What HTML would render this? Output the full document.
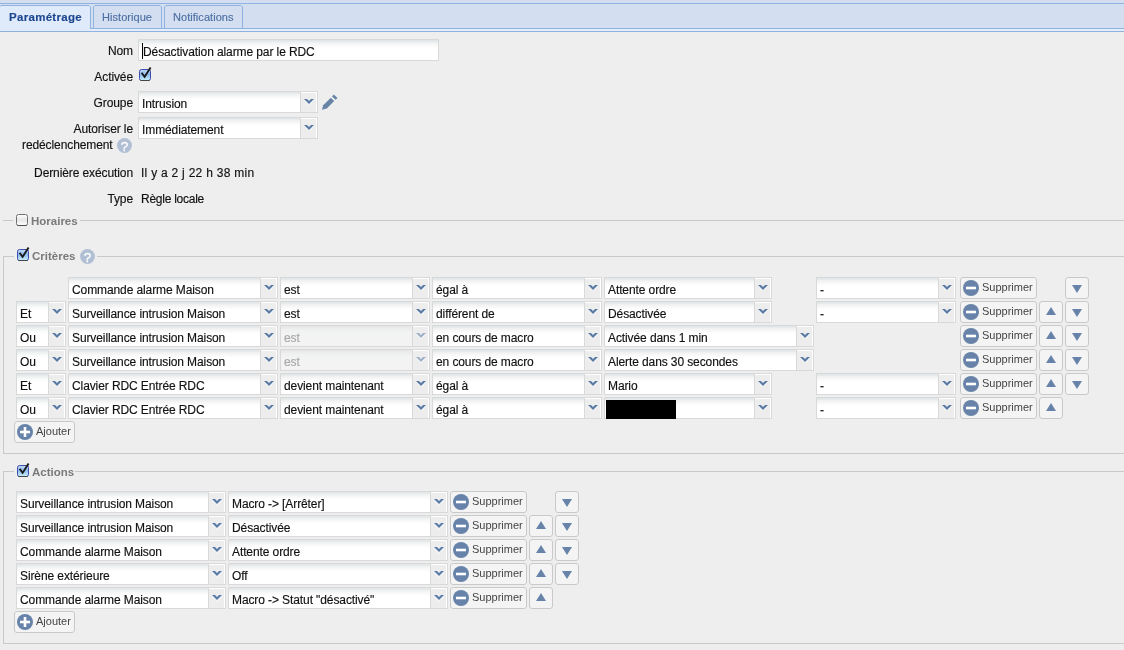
<!DOCTYPE html><html><head><meta charset="utf-8"><title>Paramétrage</title><style>
*{margin:0;padding:0;box-sizing:border-box}
html,body{width:1124px;height:650px;overflow:hidden;background:#eeeeee;font-family:"Liberation Sans", sans-serif;font-size:12px;color:#111}
.a{position:absolute}
#root div{-webkit-text-stroke:0.15px currentColor;letter-spacing:-0.1px}
#root .leg,#root .btn .t{-webkit-text-stroke:0;letter-spacing:0}
.lbl{position:absolute;right:991px;white-space:nowrap;color:#111;font-size:12px;line-height:14px}
.txt{position:absolute;white-space:nowrap;color:#111;font-size:12px;line-height:14px}
.sel{position:absolute;height:22px;border:1px solid #d9d9d9;background:linear-gradient(#dee3e6 0px,#f1f3f3 3px,#fbfbfb 6px,#fff 8px);}
.sel .v{position:absolute;left:3px;top:5px;white-space:nowrap;font-size:12px;line-height:14px;color:#111}
.sel .ar{position:absolute;right:-1px;top:-1px;width:18px;height:22px;border:1px solid #d9d9d9;background:#ededed;box-shadow:inset 0 1px 0 #fff, inset -1px 0 0 #fff}
.sel .ar svg{position:absolute;left:2.5px;top:7px}
.sel.dis{background:linear-gradient(#e3e6e8 0px,#eff0f0 4px,#f3f3f3 7px)}
.sel.dis .v{color:#a8a8a8}
.btn{position:absolute;height:22px;border:1px solid #c9c9c9;border-radius:3px;background:#f4f4f4;}
.btn .t{position:absolute;white-space:nowrap;font-size:11px;line-height:12px;color:#444}
.fl{position:absolute;height:1px;background:#c9c9c9}
.fv{position:absolute;width:1px;background:#c9c9c9}
.leg{position:absolute;white-space:nowrap;font-weight:bold;font-size:11.5px;line-height:13px;color:#7a7a7a}
</style></head><body><div id="root" style="position:absolute;left:0;top:0;width:1124px;height:650px;will-change:transform">
<div class="a" style="left:0;top:0;width:1124px;height:29px;background:#d3dff0"></div>
<div class="a" style="left:0;top:3px;width:1124px;height:1px;background:#8fb2e0"></div>
<div class="a" style="left:90px;top:28px;width:1034px;height:1px;background:#8fb2e0"></div>
<div class="a" style="left:0;top:29px;width:1124px;height:2px;background:#e3edfb"></div>
<div class="a" style="left:0;top:31px;width:1124px;height:1px;background:#8fb2e0"></div>
<svg class="a" style="left:-1px;top:5px" width="92" height="26" viewBox="0 0 92 26"><path d="M0 26 L0 2 L2 0 L90 0 L92 2 L92 26 Z" fill="#dfeafa"/><path d="M0.5 26 L0.5 2 L2 0.5 L90 0.5 L91.5 2 L91.5 24" fill="none" stroke="#8fb2e0" stroke-width="1"/></svg>
<div class="txt" style="left:9px;top:10px;font-size:11.5px;font-weight:bold;color:#1d4690;letter-spacing:0.3px">Paramétrage</div>
<svg class="a" style="left:93px;top:5px" width="69" height="23" viewBox="0 0 69 23"><path d="M0 23 L0 2 L2 0 L67 0 L69 2 L69 23 Z" fill="#d3dff0"/><path d="M0.5 23 L0.5 2 L2 0.5 L67 0.5 L68.5 2 L68.5 23" fill="none" stroke="#8fb2e0" stroke-width="1"/></svg>
<div class="txt" style="left:102px;top:10px;font-size:11px;font-weight:normal;color:#4d6fa3;letter-spacing:0.05px">Historique</div>
<svg class="a" style="left:164px;top:5px" width="79" height="23" viewBox="0 0 79 23"><path d="M0 23 L0 2 L2 0 L77 0 L79 2 L79 23 Z" fill="#d3dff0"/><path d="M0.5 23 L0.5 2 L2 0.5 L77 0.5 L78.5 2 L78.5 23" fill="none" stroke="#8fb2e0" stroke-width="1"/></svg>
<div class="txt" style="left:173px;top:10px;font-size:11px;font-weight:normal;color:#4d6fa3;letter-spacing:0.05px">Notifications</div>
<div class="a" style="right:991px;top:44px;white-space:nowrap;color:#111;font-size:12px;line-height:14px">Nom</div>
<div class="a" style="left:138px;top:39px;width:301px;height:22px;border:1px solid #d9d9d9;background:linear-gradient(#dee3e6 0px,#f1f3f3 3px,#fbfbfb 6px,#fff 8px)"></div>
<div class="a" style="left:142px;top:43px;width:1px;height:16px;background:#000"></div>
<div class="txt" style="left:143px;top:45px;color:#111">Désactivation alarme par le RDC</div>
<div class="a" style="right:991px;top:70px;white-space:nowrap;color:#111;font-size:12px;line-height:14px">Activée</div>
<svg class="a" style="left:139px;top:66px" width="14" height="16" viewBox="0 0 14 16"><defs><linearGradient id="cg13969" x1="0" y1="0" x2="0" y2="1"><stop offset="0" stop-color="#c4dcf8"/><stop offset="0.45" stop-color="#8cb9ee"/><stop offset="1" stop-color="#c9f1fc"/></linearGradient></defs><rect x="0.5" y="3.5" width="11" height="11" rx="2" fill="url(#cg13969)" stroke="#3f4cae" stroke-width="1"/><path d="M1.5 14.5 H10.5" stroke="#444" stroke-width="1"/><polyline points="2.6,6.8 5.6,10.9 11.6,1.4" fill="none" stroke="#1a1a1a" stroke-width="1.9" stroke-linejoin="miter"/></svg>
<div class="a" style="right:991px;top:96px;white-space:nowrap;color:#111;font-size:12px;line-height:14px">Groupe</div>
<div class="sel" style="left:138px;top:91px;width:180px"><div class="v">Intrusion</div><div class="ar"><svg width="10" height="7" viewBox="0 0 10 7"><polygon points="0,1 3,1 5,3 7,1 10,1 5,6" fill="#fff" opacity="0.9"/><polygon points="0,0 3,0 5,2 7,0 10,0 5,5" fill="#5a7aa6"/></svg></div></div>
<svg class="a" style="left:316px;top:90px" width="24" height="24" viewBox="0 0 24 24"><path d="M6 19.8 L7.2 15.2 L14.8 7.8 L18.2 11 L10.8 18.4 Z" fill="#6a84a8"/><path d="M16 6.4 L17.8 4.4 L21.6 8 L19.6 9.8 Z" fill="#6a84a8"/></svg>
<div class="a" style="right:991px;top:122px;white-space:nowrap;color:#111;font-size:12px;line-height:14px">Autoriser le</div>
<div class="a" style="left:22px;top:138px;white-space:nowrap;color:#111;font-size:12px;line-height:14px">redéclenchement</div>
<svg class="a" style="left:117.0px;top:138.0px" width="15.0" height="15.0" viewBox="0 0 15 15"><circle cx="7.5" cy="7.5" r="7.4" fill="#b1bfd4"/><text x="7.5" y="12.6" text-anchor="middle" font-family="Liberation Sans" font-size="13.5" fill="#fff" stroke="#fff" stroke-width="0.3">?</text></svg>
<div class="sel" style="left:138px;top:117px;width:180px"><div class="v">Immédiatement</div><div class="ar"><svg width="10" height="7" viewBox="0 0 10 7"><polygon points="0,1 3,1 5,3 7,1 10,1 5,6" fill="#fff" opacity="0.9"/><polygon points="0,0 3,0 5,2 7,0 10,0 5,5" fill="#5a7aa6"/></svg></div></div>
<div class="a" style="right:991px;top:166px;white-space:nowrap;color:#111;font-size:12px;line-height:14px">Dernière exécution</div>
<div class="txt" style="left:141px;top:166px;letter-spacing:0.27px">Il y a 2 j 22 h 38 min</div>
<div class="a" style="right:991px;top:192px;white-space:nowrap;color:#111;font-size:12px;line-height:14px">Type</div>
<div class="txt" style="left:141px;top:192px;letter-spacing:-0.25px">Règle locale</div>
<div class="fl" style="left:3px;top:220px;width:10px"></div>
<div class="fl" style="left:80px;top:220px;width:1044px"></div>
<svg class="a" style="left:16px;top:214px" width="13" height="13" viewBox="0 0 13 13"><defs><linearGradient id="cu16214" x1="0" y1="0" x2="0" y2="1"><stop offset="0" stop-color="#fdfdfd"/><stop offset="0.5" stop-color="#e6e6e6"/><stop offset="1" stop-color="#ffffff"/></linearGradient></defs><rect x="0.5" y="0.5" width="11" height="11" rx="2" fill="url(#cu16214)" stroke="#707070" stroke-width="1"/><path d="M1.5 11.5 H10.5" stroke="#505050" stroke-width="1"/></svg>
<div class="leg" style="left:31px;top:215px">Horaires</div>
<div class="fl" style="left:3px;top:256px;width:11px"></div>
<div class="fl" style="left:97px;top:256px;width:1027px"></div>
<div class="fv" style="left:3px;top:256px;height:198px"></div>
<div class="fl" style="left:3px;top:453px;width:1121px"></div>
<svg class="a" style="left:17px;top:246px" width="14" height="16" viewBox="0 0 14 16"><defs><linearGradient id="cg17249" x1="0" y1="0" x2="0" y2="1"><stop offset="0" stop-color="#c4dcf8"/><stop offset="0.45" stop-color="#8cb9ee"/><stop offset="1" stop-color="#c9f1fc"/></linearGradient></defs><rect x="0.5" y="3.5" width="11" height="11" rx="2" fill="url(#cg17249)" stroke="#3f4cae" stroke-width="1"/><path d="M1.5 14.5 H10.5" stroke="#444" stroke-width="1"/><polyline points="2.6,6.8 5.6,10.9 11.6,1.4" fill="none" stroke="#1a1a1a" stroke-width="1.9" stroke-linejoin="miter"/></svg>
<div class="leg" style="left:32px;top:250px">Critères</div>
<svg class="a" style="left:79.5px;top:249.2px" width="15.0" height="15.0" viewBox="0 0 15 15"><circle cx="7.5" cy="7.5" r="7.4" fill="#b1bfd4"/><text x="7.5" y="12.6" text-anchor="middle" font-family="Liberation Sans" font-size="13.5" fill="#fff" stroke="#fff" stroke-width="0.3">?</text></svg>
<div class="sel" style="left:68px;top:277px;width:210px"><div class="v">Commande alarme Maison</div><div class="ar"><svg width="10" height="7" viewBox="0 0 10 7"><polygon points="0,1 3,1 5,3 7,1 10,1 5,6" fill="#fff" opacity="0.9"/><polygon points="0,0 3,0 5,2 7,0 10,0 5,5" fill="#5a7aa6"/></svg></div></div>
<div class="sel" style="left:280px;top:277px;width:150px"><div class="v">est</div><div class="ar"><svg width="10" height="7" viewBox="0 0 10 7"><polygon points="0,1 3,1 5,3 7,1 10,1 5,6" fill="#fff" opacity="0.9"/><polygon points="0,0 3,0 5,2 7,0 10,0 5,5" fill="#5a7aa6"/></svg></div></div>
<div class="sel" style="left:432px;top:277px;width:170px"><div class="v">égal à</div><div class="ar"><svg width="10" height="7" viewBox="0 0 10 7"><polygon points="0,1 3,1 5,3 7,1 10,1 5,6" fill="#fff" opacity="0.9"/><polygon points="0,0 3,0 5,2 7,0 10,0 5,5" fill="#5a7aa6"/></svg></div></div>
<div class="sel" style="left:604px;top:277px;width:168px"><div class="v">Attente ordre</div><div class="ar"><svg width="10" height="7" viewBox="0 0 10 7"><polygon points="0,1 3,1 5,3 7,1 10,1 5,6" fill="#fff" opacity="0.9"/><polygon points="0,0 3,0 5,2 7,0 10,0 5,5" fill="#5a7aa6"/></svg></div></div>
<div class="sel" style="left:816px;top:277px;width:140px"><div class="v">-</div><div class="ar"><svg width="10" height="7" viewBox="0 0 10 7"><polygon points="0,1 3,1 5,3 7,1 10,1 5,6" fill="#fff" opacity="0.9"/><polygon points="0,0 3,0 5,2 7,0 10,0 5,5" fill="#5a7aa6"/></svg></div></div>
<div class="btn" style="left:960px;top:277px;width:77px"><svg class="a" style="left:2px;top:2px" width="16" height="16" viewBox="0 0 16 16"><circle cx="8" cy="8" r="8" fill="#6883a9"/><rect x="3" y="6.7" width="10" height="2.6" fill="#fff"/></svg><div class="t" style="left:21px;top:3px">Supprimer</div></div>
<div class="btn" style="left:1065px;top:277px;width:24px"><svg class="a" style="left:5px;top:6px" width="12" height="10" viewBox="0 0 12 10"><polygon points="1,1 6,9 11,1" fill="#6883a9"/></svg></div>
<div class="sel" style="left:16px;top:301px;width:50px"><div class="v">Et</div><div class="ar"><svg width="10" height="7" viewBox="0 0 10 7"><polygon points="0,1 3,1 5,3 7,1 10,1 5,6" fill="#fff" opacity="0.9"/><polygon points="0,0 3,0 5,2 7,0 10,0 5,5" fill="#5a7aa6"/></svg></div></div>
<div class="sel" style="left:68px;top:301px;width:210px"><div class="v">Surveillance intrusion Maison</div><div class="ar"><svg width="10" height="7" viewBox="0 0 10 7"><polygon points="0,1 3,1 5,3 7,1 10,1 5,6" fill="#fff" opacity="0.9"/><polygon points="0,0 3,0 5,2 7,0 10,0 5,5" fill="#5a7aa6"/></svg></div></div>
<div class="sel" style="left:280px;top:301px;width:150px"><div class="v">est</div><div class="ar"><svg width="10" height="7" viewBox="0 0 10 7"><polygon points="0,1 3,1 5,3 7,1 10,1 5,6" fill="#fff" opacity="0.9"/><polygon points="0,0 3,0 5,2 7,0 10,0 5,5" fill="#5a7aa6"/></svg></div></div>
<div class="sel" style="left:432px;top:301px;width:170px"><div class="v">différent de</div><div class="ar"><svg width="10" height="7" viewBox="0 0 10 7"><polygon points="0,1 3,1 5,3 7,1 10,1 5,6" fill="#fff" opacity="0.9"/><polygon points="0,0 3,0 5,2 7,0 10,0 5,5" fill="#5a7aa6"/></svg></div></div>
<div class="sel" style="left:604px;top:301px;width:168px"><div class="v">Désactivée</div><div class="ar"><svg width="10" height="7" viewBox="0 0 10 7"><polygon points="0,1 3,1 5,3 7,1 10,1 5,6" fill="#fff" opacity="0.9"/><polygon points="0,0 3,0 5,2 7,0 10,0 5,5" fill="#5a7aa6"/></svg></div></div>
<div class="sel" style="left:816px;top:301px;width:140px"><div class="v">-</div><div class="ar"><svg width="10" height="7" viewBox="0 0 10 7"><polygon points="0,1 3,1 5,3 7,1 10,1 5,6" fill="#fff" opacity="0.9"/><polygon points="0,0 3,0 5,2 7,0 10,0 5,5" fill="#5a7aa6"/></svg></div></div>
<div class="btn" style="left:960px;top:301px;width:77px"><svg class="a" style="left:2px;top:2px" width="16" height="16" viewBox="0 0 16 16"><circle cx="8" cy="8" r="8" fill="#6883a9"/><rect x="3" y="6.7" width="10" height="2.6" fill="#fff"/></svg><div class="t" style="left:21px;top:3px">Supprimer</div></div>
<div class="btn" style="left:1039px;top:301px;width:24px"><svg class="a" style="left:5px;top:4px" width="12" height="10" viewBox="0 0 12 10"><polygon points="1,9 6,1 11,9" fill="#6883a9"/></svg></div>
<div class="btn" style="left:1065px;top:301px;width:24px"><svg class="a" style="left:5px;top:6px" width="12" height="10" viewBox="0 0 12 10"><polygon points="1,1 6,9 11,1" fill="#6883a9"/></svg></div>
<div class="sel" style="left:16px;top:325px;width:50px"><div class="v">Ou</div><div class="ar"><svg width="10" height="7" viewBox="0 0 10 7"><polygon points="0,1 3,1 5,3 7,1 10,1 5,6" fill="#fff" opacity="0.9"/><polygon points="0,0 3,0 5,2 7,0 10,0 5,5" fill="#5a7aa6"/></svg></div></div>
<div class="sel" style="left:68px;top:325px;width:210px"><div class="v">Surveillance intrusion Maison</div><div class="ar"><svg width="10" height="7" viewBox="0 0 10 7"><polygon points="0,1 3,1 5,3 7,1 10,1 5,6" fill="#fff" opacity="0.9"/><polygon points="0,0 3,0 5,2 7,0 10,0 5,5" fill="#5a7aa6"/></svg></div></div>
<div class="sel dis" style="left:280px;top:325px;width:150px"><div class="v">est</div><div class="ar"><svg width="10" height="7" viewBox="0 0 10 7"><polygon points="0,1 3,1 5,3 7,1 10,1 5,6" fill="#fff" opacity="0.9"/><polygon points="0,0 3,0 5,2 7,0 10,0 5,5" fill="#9eb0c6"/></svg></div></div>
<div class="sel" style="left:432px;top:325px;width:170px"><div class="v">en cours de macro</div><div class="ar"><svg width="10" height="7" viewBox="0 0 10 7"><polygon points="0,1 3,1 5,3 7,1 10,1 5,6" fill="#fff" opacity="0.9"/><polygon points="0,0 3,0 5,2 7,0 10,0 5,5" fill="#5a7aa6"/></svg></div></div>
<div class="sel" style="left:604px;top:325px;width:210px"><div class="v">Activée dans 1 min</div><div class="ar"><svg width="10" height="7" viewBox="0 0 10 7"><polygon points="0,1 3,1 5,3 7,1 10,1 5,6" fill="#fff" opacity="0.9"/><polygon points="0,0 3,0 5,2 7,0 10,0 5,5" fill="#5a7aa6"/></svg></div></div>
<div class="btn" style="left:960px;top:325px;width:77px"><svg class="a" style="left:2px;top:2px" width="16" height="16" viewBox="0 0 16 16"><circle cx="8" cy="8" r="8" fill="#6883a9"/><rect x="3" y="6.7" width="10" height="2.6" fill="#fff"/></svg><div class="t" style="left:21px;top:3px">Supprimer</div></div>
<div class="btn" style="left:1039px;top:325px;width:24px"><svg class="a" style="left:5px;top:4px" width="12" height="10" viewBox="0 0 12 10"><polygon points="1,9 6,1 11,9" fill="#6883a9"/></svg></div>
<div class="btn" style="left:1065px;top:325px;width:24px"><svg class="a" style="left:5px;top:6px" width="12" height="10" viewBox="0 0 12 10"><polygon points="1,1 6,9 11,1" fill="#6883a9"/></svg></div>
<div class="sel" style="left:16px;top:349px;width:50px"><div class="v">Ou</div><div class="ar"><svg width="10" height="7" viewBox="0 0 10 7"><polygon points="0,1 3,1 5,3 7,1 10,1 5,6" fill="#fff" opacity="0.9"/><polygon points="0,0 3,0 5,2 7,0 10,0 5,5" fill="#5a7aa6"/></svg></div></div>
<div class="sel" style="left:68px;top:349px;width:210px"><div class="v">Surveillance intrusion Maison</div><div class="ar"><svg width="10" height="7" viewBox="0 0 10 7"><polygon points="0,1 3,1 5,3 7,1 10,1 5,6" fill="#fff" opacity="0.9"/><polygon points="0,0 3,0 5,2 7,0 10,0 5,5" fill="#5a7aa6"/></svg></div></div>
<div class="sel dis" style="left:280px;top:349px;width:150px"><div class="v">est</div><div class="ar"><svg width="10" height="7" viewBox="0 0 10 7"><polygon points="0,1 3,1 5,3 7,1 10,1 5,6" fill="#fff" opacity="0.9"/><polygon points="0,0 3,0 5,2 7,0 10,0 5,5" fill="#9eb0c6"/></svg></div></div>
<div class="sel" style="left:432px;top:349px;width:170px"><div class="v">en cours de macro</div><div class="ar"><svg width="10" height="7" viewBox="0 0 10 7"><polygon points="0,1 3,1 5,3 7,1 10,1 5,6" fill="#fff" opacity="0.9"/><polygon points="0,0 3,0 5,2 7,0 10,0 5,5" fill="#5a7aa6"/></svg></div></div>
<div class="sel" style="left:604px;top:349px;width:210px"><div class="v">Alerte dans 30 secondes</div><div class="ar"><svg width="10" height="7" viewBox="0 0 10 7"><polygon points="0,1 3,1 5,3 7,1 10,1 5,6" fill="#fff" opacity="0.9"/><polygon points="0,0 3,0 5,2 7,0 10,0 5,5" fill="#5a7aa6"/></svg></div></div>
<div class="btn" style="left:960px;top:349px;width:77px"><svg class="a" style="left:2px;top:2px" width="16" height="16" viewBox="0 0 16 16"><circle cx="8" cy="8" r="8" fill="#6883a9"/><rect x="3" y="6.7" width="10" height="2.6" fill="#fff"/></svg><div class="t" style="left:21px;top:3px">Supprimer</div></div>
<div class="btn" style="left:1039px;top:349px;width:24px"><svg class="a" style="left:5px;top:4px" width="12" height="10" viewBox="0 0 12 10"><polygon points="1,9 6,1 11,9" fill="#6883a9"/></svg></div>
<div class="btn" style="left:1065px;top:349px;width:24px"><svg class="a" style="left:5px;top:6px" width="12" height="10" viewBox="0 0 12 10"><polygon points="1,1 6,9 11,1" fill="#6883a9"/></svg></div>
<div class="sel" style="left:16px;top:373px;width:50px"><div class="v">Et</div><div class="ar"><svg width="10" height="7" viewBox="0 0 10 7"><polygon points="0,1 3,1 5,3 7,1 10,1 5,6" fill="#fff" opacity="0.9"/><polygon points="0,0 3,0 5,2 7,0 10,0 5,5" fill="#5a7aa6"/></svg></div></div>
<div class="sel" style="left:68px;top:373px;width:210px"><div class="v">Clavier RDC Entrée RDC</div><div class="ar"><svg width="10" height="7" viewBox="0 0 10 7"><polygon points="0,1 3,1 5,3 7,1 10,1 5,6" fill="#fff" opacity="0.9"/><polygon points="0,0 3,0 5,2 7,0 10,0 5,5" fill="#5a7aa6"/></svg></div></div>
<div class="sel" style="left:280px;top:373px;width:150px"><div class="v">devient maintenant</div><div class="ar"><svg width="10" height="7" viewBox="0 0 10 7"><polygon points="0,1 3,1 5,3 7,1 10,1 5,6" fill="#fff" opacity="0.9"/><polygon points="0,0 3,0 5,2 7,0 10,0 5,5" fill="#5a7aa6"/></svg></div></div>
<div class="sel" style="left:432px;top:373px;width:170px"><div class="v">égal à</div><div class="ar"><svg width="10" height="7" viewBox="0 0 10 7"><polygon points="0,1 3,1 5,3 7,1 10,1 5,6" fill="#fff" opacity="0.9"/><polygon points="0,0 3,0 5,2 7,0 10,0 5,5" fill="#5a7aa6"/></svg></div></div>
<div class="sel" style="left:604px;top:373px;width:168px"><div class="v">Mario</div><div class="ar"><svg width="10" height="7" viewBox="0 0 10 7"><polygon points="0,1 3,1 5,3 7,1 10,1 5,6" fill="#fff" opacity="0.9"/><polygon points="0,0 3,0 5,2 7,0 10,0 5,5" fill="#5a7aa6"/></svg></div></div>
<div class="sel" style="left:816px;top:373px;width:140px"><div class="v">-</div><div class="ar"><svg width="10" height="7" viewBox="0 0 10 7"><polygon points="0,1 3,1 5,3 7,1 10,1 5,6" fill="#fff" opacity="0.9"/><polygon points="0,0 3,0 5,2 7,0 10,0 5,5" fill="#5a7aa6"/></svg></div></div>
<div class="btn" style="left:960px;top:373px;width:77px"><svg class="a" style="left:2px;top:2px" width="16" height="16" viewBox="0 0 16 16"><circle cx="8" cy="8" r="8" fill="#6883a9"/><rect x="3" y="6.7" width="10" height="2.6" fill="#fff"/></svg><div class="t" style="left:21px;top:3px">Supprimer</div></div>
<div class="btn" style="left:1039px;top:373px;width:24px"><svg class="a" style="left:5px;top:4px" width="12" height="10" viewBox="0 0 12 10"><polygon points="1,9 6,1 11,9" fill="#6883a9"/></svg></div>
<div class="btn" style="left:1065px;top:373px;width:24px"><svg class="a" style="left:5px;top:6px" width="12" height="10" viewBox="0 0 12 10"><polygon points="1,1 6,9 11,1" fill="#6883a9"/></svg></div>
<div class="sel" style="left:16px;top:397px;width:50px"><div class="v">Ou</div><div class="ar"><svg width="10" height="7" viewBox="0 0 10 7"><polygon points="0,1 3,1 5,3 7,1 10,1 5,6" fill="#fff" opacity="0.9"/><polygon points="0,0 3,0 5,2 7,0 10,0 5,5" fill="#5a7aa6"/></svg></div></div>
<div class="sel" style="left:68px;top:397px;width:210px"><div class="v">Clavier RDC Entrée RDC</div><div class="ar"><svg width="10" height="7" viewBox="0 0 10 7"><polygon points="0,1 3,1 5,3 7,1 10,1 5,6" fill="#fff" opacity="0.9"/><polygon points="0,0 3,0 5,2 7,0 10,0 5,5" fill="#5a7aa6"/></svg></div></div>
<div class="sel" style="left:280px;top:397px;width:150px"><div class="v">devient maintenant</div><div class="ar"><svg width="10" height="7" viewBox="0 0 10 7"><polygon points="0,1 3,1 5,3 7,1 10,1 5,6" fill="#fff" opacity="0.9"/><polygon points="0,0 3,0 5,2 7,0 10,0 5,5" fill="#5a7aa6"/></svg></div></div>
<div class="sel" style="left:432px;top:397px;width:170px"><div class="v">égal à</div><div class="ar"><svg width="10" height="7" viewBox="0 0 10 7"><polygon points="0,1 3,1 5,3 7,1 10,1 5,6" fill="#fff" opacity="0.9"/><polygon points="0,0 3,0 5,2 7,0 10,0 5,5" fill="#5a7aa6"/></svg></div></div>
<div class="sel" style="left:604px;top:397px;width:168px"><div class="a" style="left:1px;top:2px;width:70px;height:19px;background:#000"></div><div class="ar"><svg width="10" height="7" viewBox="0 0 10 7"><polygon points="0,1 3,1 5,3 7,1 10,1 5,6" fill="#fff" opacity="0.9"/><polygon points="0,0 3,0 5,2 7,0 10,0 5,5" fill="#5a7aa6"/></svg></div></div>
<div class="sel" style="left:816px;top:397px;width:140px"><div class="v">-</div><div class="ar"><svg width="10" height="7" viewBox="0 0 10 7"><polygon points="0,1 3,1 5,3 7,1 10,1 5,6" fill="#fff" opacity="0.9"/><polygon points="0,0 3,0 5,2 7,0 10,0 5,5" fill="#5a7aa6"/></svg></div></div>
<div class="btn" style="left:960px;top:397px;width:77px"><svg class="a" style="left:2px;top:2px" width="16" height="16" viewBox="0 0 16 16"><circle cx="8" cy="8" r="8" fill="#6883a9"/><rect x="3" y="6.7" width="10" height="2.6" fill="#fff"/></svg><div class="t" style="left:21px;top:3px">Supprimer</div></div>
<div class="btn" style="left:1039px;top:397px;width:24px"><svg class="a" style="left:5px;top:4px" width="12" height="10" viewBox="0 0 12 10"><polygon points="1,9 6,1 11,9" fill="#6883a9"/></svg></div>
<div class="btn" style="left:14px;top:421px;width:61px"><svg class="a" style="left:2px;top:2px" width="16" height="16" viewBox="0 0 16 16"><circle cx="8" cy="8" r="8" fill="#6883a9"/><rect x="3" y="6.7" width="10" height="2.6" fill="#fff"/><rect x="6.7" y="3" width="2.6" height="10" fill="#fff"/></svg><div class="t" style="left:21px;top:3px">Ajouter</div></div>
<div class="fl" style="left:3px;top:471px;width:11px"></div>
<div class="fl" style="left:75px;top:471px;width:1049px"></div>
<div class="fv" style="left:3px;top:471px;height:173px"></div>
<div class="fl" style="left:3px;top:643px;width:1121px"></div>
<svg class="a" style="left:17px;top:462px" width="14" height="16" viewBox="0 0 14 16"><defs><linearGradient id="cg17465" x1="0" y1="0" x2="0" y2="1"><stop offset="0" stop-color="#c4dcf8"/><stop offset="0.45" stop-color="#8cb9ee"/><stop offset="1" stop-color="#c9f1fc"/></linearGradient></defs><rect x="0.5" y="3.5" width="11" height="11" rx="2" fill="url(#cg17465)" stroke="#3f4cae" stroke-width="1"/><path d="M1.5 14.5 H10.5" stroke="#444" stroke-width="1"/><polyline points="2.6,6.8 5.6,10.9 11.6,1.4" fill="none" stroke="#1a1a1a" stroke-width="1.9" stroke-linejoin="miter"/></svg>
<div class="leg" style="left:32px;top:466px">Actions</div>
<div class="sel" style="left:16px;top:491px;width:210px"><div class="v">Surveillance intrusion Maison</div><div class="ar"><svg width="10" height="7" viewBox="0 0 10 7"><polygon points="0,1 3,1 5,3 7,1 10,1 5,6" fill="#fff" opacity="0.9"/><polygon points="0,0 3,0 5,2 7,0 10,0 5,5" fill="#5a7aa6"/></svg></div></div>
<div class="sel" style="left:228px;top:491px;width:220px"><div class="v">Macro -&gt; [Arrêter]</div><div class="ar"><svg width="10" height="7" viewBox="0 0 10 7"><polygon points="0,1 3,1 5,3 7,1 10,1 5,6" fill="#fff" opacity="0.9"/><polygon points="0,0 3,0 5,2 7,0 10,0 5,5" fill="#5a7aa6"/></svg></div></div>
<div class="btn" style="left:450px;top:491px;width:77px"><svg class="a" style="left:2px;top:2px" width="16" height="16" viewBox="0 0 16 16"><circle cx="8" cy="8" r="8" fill="#6883a9"/><rect x="3" y="6.7" width="10" height="2.6" fill="#fff"/></svg><div class="t" style="left:21px;top:3px">Supprimer</div></div>
<div class="btn" style="left:555px;top:491px;width:24px"><svg class="a" style="left:5px;top:6px" width="12" height="10" viewBox="0 0 12 10"><polygon points="1,1 6,9 11,1" fill="#6883a9"/></svg></div>
<div class="sel" style="left:16px;top:515px;width:210px"><div class="v">Surveillance intrusion Maison</div><div class="ar"><svg width="10" height="7" viewBox="0 0 10 7"><polygon points="0,1 3,1 5,3 7,1 10,1 5,6" fill="#fff" opacity="0.9"/><polygon points="0,0 3,0 5,2 7,0 10,0 5,5" fill="#5a7aa6"/></svg></div></div>
<div class="sel" style="left:228px;top:515px;width:220px"><div class="v">Désactivée</div><div class="ar"><svg width="10" height="7" viewBox="0 0 10 7"><polygon points="0,1 3,1 5,3 7,1 10,1 5,6" fill="#fff" opacity="0.9"/><polygon points="0,0 3,0 5,2 7,0 10,0 5,5" fill="#5a7aa6"/></svg></div></div>
<div class="btn" style="left:450px;top:515px;width:77px"><svg class="a" style="left:2px;top:2px" width="16" height="16" viewBox="0 0 16 16"><circle cx="8" cy="8" r="8" fill="#6883a9"/><rect x="3" y="6.7" width="10" height="2.6" fill="#fff"/></svg><div class="t" style="left:21px;top:3px">Supprimer</div></div>
<div class="btn" style="left:529px;top:515px;width:24px"><svg class="a" style="left:5px;top:4px" width="12" height="10" viewBox="0 0 12 10"><polygon points="1,9 6,1 11,9" fill="#6883a9"/></svg></div>
<div class="btn" style="left:555px;top:515px;width:24px"><svg class="a" style="left:5px;top:6px" width="12" height="10" viewBox="0 0 12 10"><polygon points="1,1 6,9 11,1" fill="#6883a9"/></svg></div>
<div class="sel" style="left:16px;top:539px;width:210px"><div class="v">Commande alarme Maison</div><div class="ar"><svg width="10" height="7" viewBox="0 0 10 7"><polygon points="0,1 3,1 5,3 7,1 10,1 5,6" fill="#fff" opacity="0.9"/><polygon points="0,0 3,0 5,2 7,0 10,0 5,5" fill="#5a7aa6"/></svg></div></div>
<div class="sel" style="left:228px;top:539px;width:220px"><div class="v">Attente ordre</div><div class="ar"><svg width="10" height="7" viewBox="0 0 10 7"><polygon points="0,1 3,1 5,3 7,1 10,1 5,6" fill="#fff" opacity="0.9"/><polygon points="0,0 3,0 5,2 7,0 10,0 5,5" fill="#5a7aa6"/></svg></div></div>
<div class="btn" style="left:450px;top:539px;width:77px"><svg class="a" style="left:2px;top:2px" width="16" height="16" viewBox="0 0 16 16"><circle cx="8" cy="8" r="8" fill="#6883a9"/><rect x="3" y="6.7" width="10" height="2.6" fill="#fff"/></svg><div class="t" style="left:21px;top:3px">Supprimer</div></div>
<div class="btn" style="left:529px;top:539px;width:24px"><svg class="a" style="left:5px;top:4px" width="12" height="10" viewBox="0 0 12 10"><polygon points="1,9 6,1 11,9" fill="#6883a9"/></svg></div>
<div class="btn" style="left:555px;top:539px;width:24px"><svg class="a" style="left:5px;top:6px" width="12" height="10" viewBox="0 0 12 10"><polygon points="1,1 6,9 11,1" fill="#6883a9"/></svg></div>
<div class="sel" style="left:16px;top:563px;width:210px"><div class="v">Sirène extérieure</div><div class="ar"><svg width="10" height="7" viewBox="0 0 10 7"><polygon points="0,1 3,1 5,3 7,1 10,1 5,6" fill="#fff" opacity="0.9"/><polygon points="0,0 3,0 5,2 7,0 10,0 5,5" fill="#5a7aa6"/></svg></div></div>
<div class="sel" style="left:228px;top:563px;width:220px"><div class="v">Off</div><div class="ar"><svg width="10" height="7" viewBox="0 0 10 7"><polygon points="0,1 3,1 5,3 7,1 10,1 5,6" fill="#fff" opacity="0.9"/><polygon points="0,0 3,0 5,2 7,0 10,0 5,5" fill="#5a7aa6"/></svg></div></div>
<div class="btn" style="left:450px;top:563px;width:77px"><svg class="a" style="left:2px;top:2px" width="16" height="16" viewBox="0 0 16 16"><circle cx="8" cy="8" r="8" fill="#6883a9"/><rect x="3" y="6.7" width="10" height="2.6" fill="#fff"/></svg><div class="t" style="left:21px;top:3px">Supprimer</div></div>
<div class="btn" style="left:529px;top:563px;width:24px"><svg class="a" style="left:5px;top:4px" width="12" height="10" viewBox="0 0 12 10"><polygon points="1,9 6,1 11,9" fill="#6883a9"/></svg></div>
<div class="btn" style="left:555px;top:563px;width:24px"><svg class="a" style="left:5px;top:6px" width="12" height="10" viewBox="0 0 12 10"><polygon points="1,1 6,9 11,1" fill="#6883a9"/></svg></div>
<div class="sel" style="left:16px;top:587px;width:210px"><div class="v">Commande alarme Maison</div><div class="ar"><svg width="10" height="7" viewBox="0 0 10 7"><polygon points="0,1 3,1 5,3 7,1 10,1 5,6" fill="#fff" opacity="0.9"/><polygon points="0,0 3,0 5,2 7,0 10,0 5,5" fill="#5a7aa6"/></svg></div></div>
<div class="sel" style="left:228px;top:587px;width:220px"><div class="v">Macro -&gt; Statut "désactivé"</div><div class="ar"><svg width="10" height="7" viewBox="0 0 10 7"><polygon points="0,1 3,1 5,3 7,1 10,1 5,6" fill="#fff" opacity="0.9"/><polygon points="0,0 3,0 5,2 7,0 10,0 5,5" fill="#5a7aa6"/></svg></div></div>
<div class="btn" style="left:450px;top:587px;width:77px"><svg class="a" style="left:2px;top:2px" width="16" height="16" viewBox="0 0 16 16"><circle cx="8" cy="8" r="8" fill="#6883a9"/><rect x="3" y="6.7" width="10" height="2.6" fill="#fff"/></svg><div class="t" style="left:21px;top:3px">Supprimer</div></div>
<div class="btn" style="left:529px;top:587px;width:24px"><svg class="a" style="left:5px;top:4px" width="12" height="10" viewBox="0 0 12 10"><polygon points="1,9 6,1 11,9" fill="#6883a9"/></svg></div>
<div class="btn" style="left:14px;top:611px;width:61px"><svg class="a" style="left:2px;top:2px" width="16" height="16" viewBox="0 0 16 16"><circle cx="8" cy="8" r="8" fill="#6883a9"/><rect x="3" y="6.7" width="10" height="2.6" fill="#fff"/><rect x="6.7" y="3" width="2.6" height="10" fill="#fff"/></svg><div class="t" style="left:21px;top:3px">Ajouter</div></div>
</div></body></html>
